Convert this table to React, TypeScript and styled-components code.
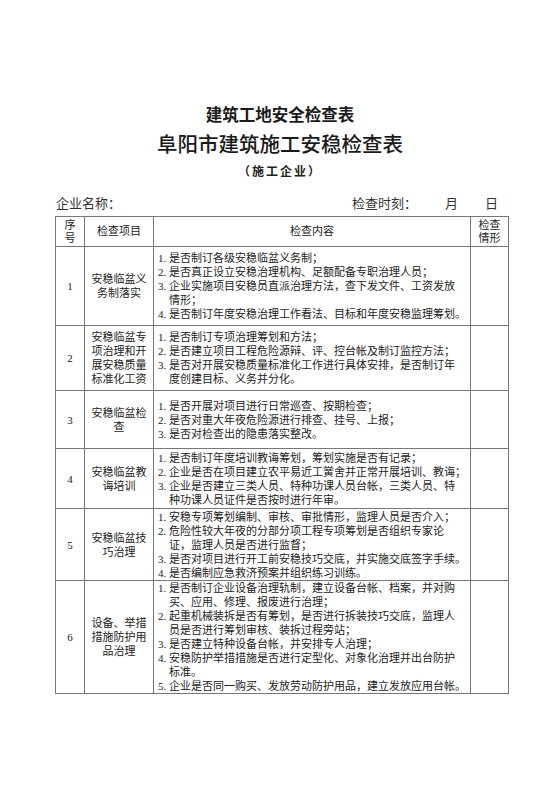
import React from "react";
import styled, { createGlobalStyle } from "styled-components";

const Global = createGlobalStyle`
  html, body { margin: 0; padding: 0; background: #fff; }
  body {
    font-family: "Liberation Serif", "Noto Sans CJK SC", serif;
    color: #222;
  }
`;

const Page = styled.div`
  width: 560px;
  height: 792px;
  padding-top: 104px;
  box-sizing: border-box;
  background: #fff;
`;

const TitleSmall = styled.h2`
  margin: 0;
  text-align: center;
  font-family: "Noto Sans CJK SC", sans-serif;
  font-weight: 700;
  font-size: 16.5px;
  line-height: 20px;
  color: #1a1a1a;
`;

const TitleMain = styled.h1`
  margin: 7px 0 0;
  text-align: center;
  font-family: "Noto Sans CJK SC", sans-serif;
  font-weight: 500;
  font-size: 20.5px;
  line-height: 24px;
  color: #1a1a1a;
`;

const Subtitle = styled.div`
  margin-top: 7px;
  text-align: center;
  font-family: "Noto Sans CJK SC", sans-serif;
  font-weight: 700;
  font-size: 12px;
  line-height: 18px;
  letter-spacing: 2px;
  color: #222;
`;

const InfoRow = styled.div`
  margin: 14px 0 4px 56px;
  width: 442px;
  display: flex;
  justify-content: space-between;
  font-family: "Noto Sans CJK SC", sans-serif;
  font-size: 13px;
  line-height: 18px;
  color: #333;
`;

const DateGroup = styled.div`
  display: flex;
  align-items: baseline;
`;

const DateLabel = styled.span<{ $gap: number }>`
  margin-left: ${(p) => p.$gap}px;
`;

const Table = styled.table`
  margin-left: 55px;
  width: 454px;
  border-collapse: collapse;
  table-layout: fixed;
  font-size: 11px;
  line-height: 14px;
  color: #222;
`;

const Row = styled.tr<{ $h: number }>`
  height: ${(p) => p.$h}px;
`;

const Cell = styled.td<{ $align?: "left" | "center" }>`
  border: 1px solid #777;
  padding: 0 4px;
  vertical-align: middle;
  text-align: ${(p) => p.$align || "center"};
  overflow: hidden;
`;

const HeadCell = styled.th`
  border: 1px solid #777;
  padding: 0 2px;
  vertical-align: middle;
  text-align: center;
  font-weight: 400;
  line-height: 13px;
`;

const ItemName = styled.div`
  padding: 0 2px;
`;

const Item = styled.div`
  display: flex;
  white-space: nowrap;
`;

const Num = styled.span`
  flex: 0 0 11px;
`;

const ItemText = styled.span`
  display: block;
`;

type Row = { name: string; items: string[][]; h: number };

const rows: Row[] = [
  {
    name: "安稳临盆义务制落实",
    h: 79,
    items: [
      ["是否制订各级安稳临盆义务制；"],
      ["是否真正设立安稳治理机构、足额配备专职治理人员；"],
      ["企业实施项目安稳员直派治理方法，查下发文件、工资发放", "情形；"],
      ["是否制订年度安稳治理工作看法、目标和年度安稳监理筹划。"],
    ],
  },
  {
    name: "安稳临盆专项治理和开展安稳质量标准化工资",
    h: 65,
    items: [
      ["是否制订专项治理筹划和方法；"],
      ["是否建立项目工程危险源辩、评、控台帐及制订监控方法；"],
      ["是否对开展安稳质量标准化工作进行具体安排，是否制订年", "度创建目标、义务并分化。"],
    ],
  },
  {
    name: "安稳临盆检查",
    h: 58,
    items: [
      ["是否开展对项目进行日常巡查、按期检查；"],
      ["是否对重大年夜危险源进行排查、挂号、上报；"],
      ["是否对检查出的隐患落实整改。"],
    ],
  },
  {
    name: "安稳临盆教诲培训",
    h: 60,
    items: [
      ["是否制订年度培训教诲筹划，筹划实施是否有记录；"],
      ["企业是否在项目建立农平易近工黉舍并正常开展培训、教诲；"],
      ["企业是否建立三类人员、特种功课人员台帐，三类人员、特", "种功课人员证件是否按时进行年审。"],
    ],
  },
  {
    name: "安稳临盆技巧治理",
    h: 72,
    items: [
      ["安稳专项筹划编制、审核、审批情形，监理人员是否介入；"],
      ["危险性较大年夜的分部分项工程专项筹划是否组织专家论", "证，监理人员是否进行监督；"],
      ["是否对项目进行开工前安稳技巧交底，并实施交底签字手续。"],
      ["是否编制应急救济预案并组织练习训练。"],
    ],
  },
  {
    name: "设备、举措措施防护用品治理",
    h: 99,
    items: [
      ["是否制订企业设备治理轨制，建立设备台帐、档案，并对购", "买、应用、修理、报废进行治理；"],
      ["起重机械装拆是否有筹划，是否进行拆装技巧交底，监理人", "员是否进行筹划审核、装拆过程旁站；"],
      ["是否建立特种设备台帐，并安排专人治理；"],
      ["安稳防护举措措施是否进行定型化、对象化治理并出台防护", "标准。"],
      ["企业是否同一购买、发放劳动防护用品，建立发放应用台帐。"],
    ],
  },
];

export default function App() {
  return (
    <>
      <Global />
      <Page>
        <TitleSmall>建筑工地安全检查表</TitleSmall>
        <TitleMain>阜阳市建筑施工安稳检查表</TitleMain>
        <Subtitle>（施工企业）</Subtitle>
        <InfoRow>
          <span>企业名称：</span>
          <DateGroup>
            <span>检查时刻：</span>
            <DateLabel $gap={28}>月</DateLabel>
            <DateLabel $gap={27}>日</DateLabel>
          </DateGroup>
        </InfoRow>
        <Table>
          <colgroup>
            <col style={{ width: 29 }} />
            <col style={{ width: 69 }} />
            <col style={{ width: 317 }} />
            <col style={{ width: 38 }} />
          </colgroup>
          <thead>
            <Row $h={30}>
              <HeadCell>
                序<br />号
              </HeadCell>
              <HeadCell>检查项目</HeadCell>
              <HeadCell>检查内容</HeadCell>
              <HeadCell>
                检查<br />情形
              </HeadCell>
            </Row>
          </thead>
          <tbody>
            {rows.map((r, i) => (
              <Row key={i} $h={r.h}>
                <Cell>{i + 1}</Cell>
                <Cell>
                  <ItemName>{r.name}</ItemName>
                </Cell>
                <Cell $align="left">
                  {r.items.map((lines, j) => (
                    <Item key={j}>
                      <Num>{j + 1}.</Num>
                      <ItemText>
                        {lines.map((l, k) => (
                          <React.Fragment key={k}>
                            {k > 0 && <br />}
                            {l}
                          </React.Fragment>
                        ))}
                      </ItemText>
                    </Item>
                  ))}
                </Cell>
                <Cell />
              </Row>
            ))}
          </tbody>
        </Table>
      </Page>
    </>
  );
}
